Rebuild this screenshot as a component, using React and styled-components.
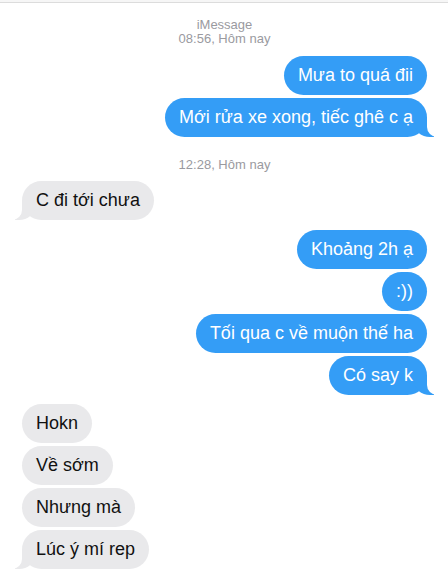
import styled, { createGlobalStyle } from "styled-components";

const GlobalStyle = createGlobalStyle`
  body {
    margin: 0;
    background: #ffffff;
    font-family: "Liberation Sans", Arial, sans-serif;
  }
`;

const Screen = styled.div`
  width: 448px;
  height: 580px;
  overflow: hidden;
  background: #ffffff;
  border-top: 2px solid #f6f6f6;
  box-sizing: border-box;
`;

const TopLine = styled.div`
  height: 1px;
  background: #dcdcdc;
`;

const Thread = styled.div`
  display: flex;
  flex-direction: column;
  padding: 15px 21px 0 22px;
`;

const Stamp = styled.div`
  text-align: center;
  font-size: 13px;
  line-height: 14px;
  color: #9a9a9f;
  margin: ${props => props.$margin || "0"};
`;

const Group = styled.div`
  display: flex;
  flex-direction: column;
  align-items: ${props => (props.$me ? "flex-end" : "flex-start")};
  gap: 3px;
  margin: ${props => props.$margin || "0"};
`;

const Bubble = styled.div`
  position: relative;
  height: 39px;
  box-sizing: border-box;
  padding: 0 14px;
  display: flex;
  align-items: center;
  font-size: 18px;
  white-space: nowrap;
  border-radius: 20px;
  background: ${props => (props.$me ? "#349df6" : "#e9e9eb")};
  color: ${props => (props.$me ? "#ffffff" : "#111111")};

  ${props =>
    props.$tail &&
    (props.$me
      ? `
    &::before {
      content: "";
      position: absolute;
      bottom: 0;
      right: -7px;
      width: 20px;
      height: 20px;
      background: #349df6;
      border-bottom-left-radius: 16px 14px;
    }
    &::after {
      content: "";
      position: absolute;
      bottom: 0;
      right: -26px;
      width: 26px;
      height: 20px;
      background: #ffffff;
      border-bottom-left-radius: 10px;
    }
  `
      : `
    &::before {
      content: "";
      position: absolute;
      bottom: 0;
      left: -7px;
      width: 20px;
      height: 20px;
      background: #e9e9eb;
      border-bottom-right-radius: 16px 14px;
    }
    &::after {
      content: "";
      position: absolute;
      bottom: 0;
      left: -26px;
      width: 26px;
      height: 20px;
      background: #ffffff;
      border-bottom-right-radius: 10px;
    }
  `)}
`;

const Text = styled.span`
  position: relative;
  z-index: 1;
`;

const groups = [
  { me: true, margin: "10px 0 0", msgs: ["Mưa to quá đii", "Mới rửa xe xong, tiếc ghê c ạ"] },
  { stamp: "12:28, Hôm nay" },
  { me: false, margin: "9px 0 0", msgs: ["C đi tới chưa"] },
  { me: true, margin: "10px 0 0", msgs: ["Khoảng 2h ạ", ":))", "Tối qua c về muộn thế ha", "Có say k"] },
  { me: false, margin: "9px 0 0", msgs: ["Hokn", "Về sớm", "Nhưng mà", "Lúc ý mí rep"] },
];

export default function App() {
  return (
    <Screen>
      <GlobalStyle />
      <TopLine />
      <Thread>
        <Stamp>iMessage</Stamp>
        <Stamp>08:56, Hôm nay</Stamp>
        {groups.map((g, i) =>
          g.stamp ? (
            <Stamp key={i} $margin="21px 0 0">{g.stamp}</Stamp>
          ) : (
            <Group key={i} $me={g.me} $margin={g.margin}>
              {g.msgs.map((m, j) => (
                <Bubble key={j} $me={g.me} $tail={j === g.msgs.length - 1}>
                  <Text>{m}</Text>
                </Bubble>
              ))}
            </Group>
          )
        )}
      </Thread>
    </Screen>
  );
}
